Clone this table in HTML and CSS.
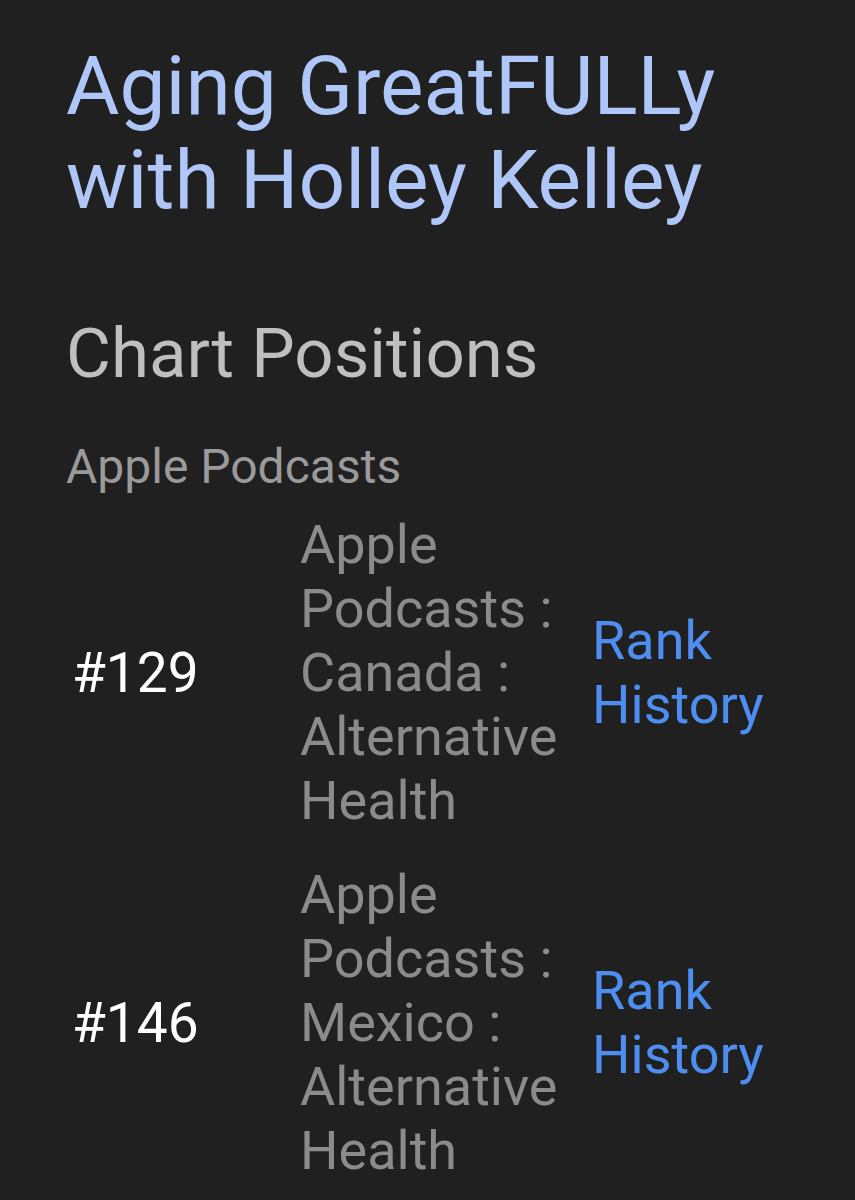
FILE: index.html
```html
<!DOCTYPE html>
<html lang="en">
<head>
<meta charset="utf-8">
<title>Aging GreatFULLy with Holley Kelley</title>
<link rel="stylesheet" href="styles.css">
</head>
<body>
<main class="page">
  <h1 class="title">Aging GreatFULLy with Holley Kelley</h1>
  <h2 class="section-title">Chart Positions</h2>
  <h3 class="source">Apple Podcasts</h3>
  <div class="charts">
    <div class="chart-row">
      <div class="rank">#129</div>
      <div class="chart-name">Apple Podcasts : Canada : Alternative Health</div>
      <div class="chart-link"><a href="#">Rank History</a></div>
    </div>
    <div class="chart-row">
      <div class="rank">#146</div>
      <div class="chart-name">Apple Podcasts : Mexico : Alternative Health</div>
      <div class="chart-link"><a href="#">Rank History</a></div>
    </div>
  </div>
</main>
</body>
</html>
```

FILE: styles.css
```css
html, body {
  margin: 0;
  padding: 0;
  background: #202020;
}

body {
  font-family: Roboto, "Noto Sans", "Liberation Sans", sans-serif;
  width: 855px;
  height: 1200px;
  overflow: hidden;
}

.page {
  padding: 39px 0 0 66px;
}

.title {
  margin: 0;
  font-size: 82px;
  line-height: 94px;
  font-weight: 400;
  color: #aec6f8;
  width: 720px;
}

.section-title {
  margin: 85px 0 0;
  font-size: 69px;
  line-height: 84px;
  font-weight: 400;
  color: #bfbfbf;
}

.source {
  margin: 41px 0 0;
  font-size: 48px;
  line-height: 59px;
  font-weight: 400;
  color: #9a9a9a;
}

.charts {
  margin-top: 2px;
}

.chart-row {
  display: grid;
  grid-template-columns: 234px 292px auto;
  align-items: center;
  padding: 15px 0;
}

.rank {
  padding-left: 6px;
  font-size: 55px;
  line-height: 64px;
  color: #ffffff;
}

.chart-name {
  padding-right: 12px;
  font-size: 54px;
  line-height: 64px;
  color: #8b8b8b;
}

.chart-link {
  font-size: 54px;
  line-height: 64px;
}

.chart-link a {
  color: #4e8ef0;
  text-decoration: none;
}
```
